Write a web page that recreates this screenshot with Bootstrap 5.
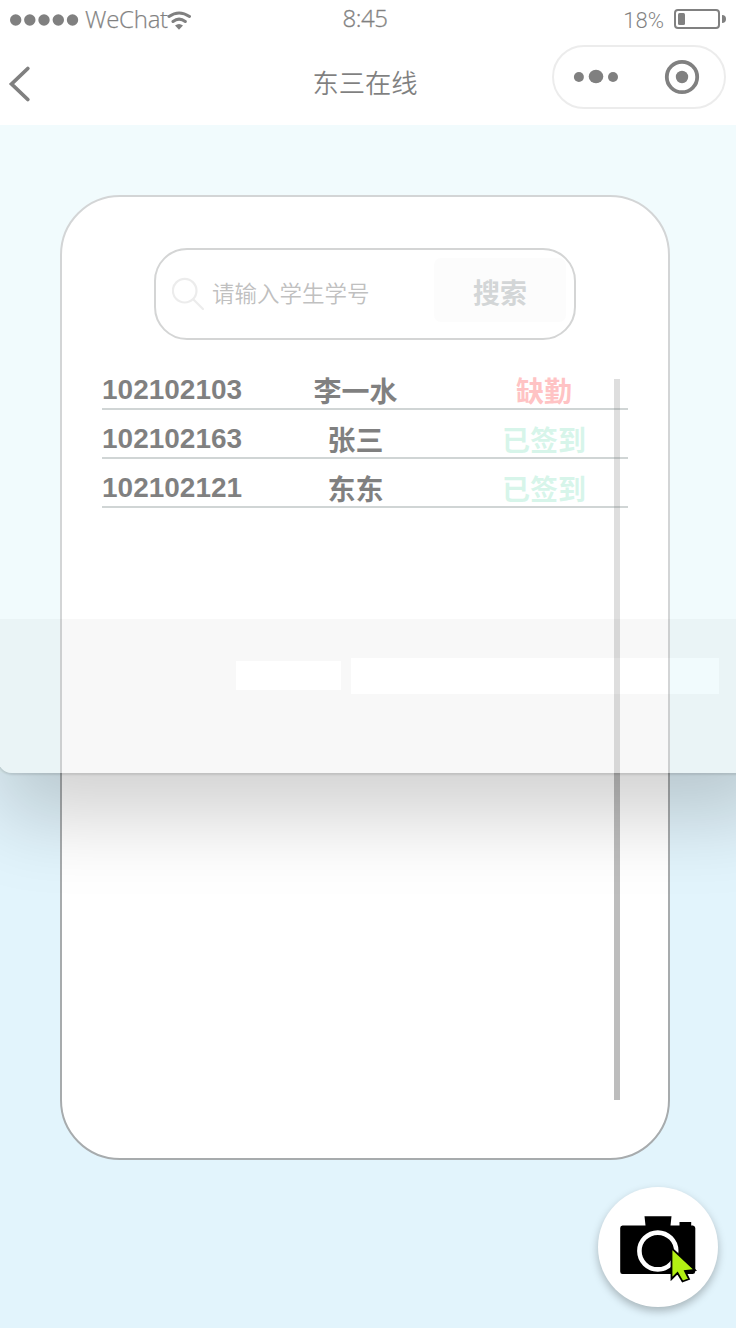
<!DOCTYPE html>
<html lang="zh-CN">
<head>
<meta charset="utf-8">
<meta name="viewport" content="width=device-width, initial-scale=1">
<title>东三在线</title>
<link href="https://cdn.jsdelivr.net/npm/bootstrap@5.3.0/dist/css/bootstrap.min.css" rel="stylesheet">
<style>
  body { background: #e2f4fc; color: #000; font-family: "Liberation Sans", "Noto Sans CJK SC", sans-serif; }
  svg { display: block; flex: none; }
  .phone { width: 736px; height: 1328px; background: linear-gradient(#e3f6fa 773px, #e2f4fc 773px); }
  .topbar { height: 125px; }
  .status { height: 40px; font: 300 24px/38px "Open Sans", sans-serif; }
  .signal { margin-left: 10px; width: 75px; }
  .carrier { width: 81px; white-space: nowrap; letter-spacing: -.25px; margin-top: -3px; -webkit-text-stroke: .25px #000; }
  .clock { left: 0; top: -1px; width: 730px; font-size: 24px; letter-spacing: -.4px; -webkit-text-stroke: .35px #000; }
  .charge { font: 300 22px/41px Roboto, sans-serif; margin-right: 10px; }
  .navrow { height: 85px; }
  .app-title { left: 0; width: 730px; top: 24px; font-size: 26.3px; line-height: 36px; font-family: "Noto Sans CJK SC", sans-serif; font-weight: 350; }
  .capsule { width: 174px; height: 64px; border: 2px solid #d9d9d9; border-radius: 32px; margin: 5px 10px 0 0; }
  .panel { width: 610px; height: 965px; margin: 70px 0 0 60px; border: 2px solid #a7abad; border-radius: 60px; padding: 51px 40px 0; }
  .search { width: 422px; height: 92px; margin-left: 52px; border: 2px solid #a9abab; border-radius: 33px; }
  .search input { width: 218px; margin-left: 6px; margin-bottom: 5px; font-size: 22.5px; line-height: 32px; color: #808080; font-family: "Noto Sans CJK SC", sans-serif; font-weight: 350; }
  .search input::placeholder { color: #808080; opacity: 1; }
  .search-btn { flex: none; width: 132px; height: 64px; background: #f8f8f8; border-radius: 7px; color: #a6acae; font-weight: 700; font-size: 27px; line-height: 64px; border: 0; padding: 4px 0 0; }
  .roll { height: 721px; margin-top: 39px; padding-top: 0; }
  .roll::after { content: ""; position: absolute; right: 8px; top: 0; width: 6px; height: 721px; background: rgba(0,0,0,.26); }
  .entry { display: grid; grid-template-columns: 140px 227px 150px; grid-template-rows: 100%; height: 49px; border-bottom: 2px solid #a0aaaa; font-weight: 700; font-size: 28px; line-height: 28px; }
  .entry:first-child { height: 31px; }
  .entry > span { align-self: end; white-space: nowrap; text-align: center; }
  .entry .sid { text-align: left; margin-bottom: 4px; }
  .entry .cjk { margin-bottom: 1px; }
  .absent { color: #ff8688; }
  .present { color: #afebd5; }
  .fab { right: 18px; bottom: 21px; width: 120px; height: 120px; border-radius: 50%; box-shadow: 0 4px 9px rgba(0,0,0,.26); }
  .ghost { left: -2px; top: 0; width: 780px; height: 773px; padding: 619px 0 0 2px; background: rgba(255,255,255,.5); border-radius: 0 0 14px 14px; overflow: hidden; }
  .ghost-shadow { left: -2px; top: -40px; width: 780px; height: 813px; border-radius: 0 0 14px 14px; box-shadow: 0 1px 2px 1px rgba(0,0,0,.1), 0 44px 80px rgba(0,0,0,.18); }
  .tint { background: rgba(0,0,0,.028); }
  .strip { margin-left: -2px; }
  .middle { display: grid; grid-template-columns: 238px 105px 10px 368px 61px; height: 36px; margin-left: -2px; }
</style>
</head>
<body>
<div class="phone position-relative overflow-hidden">
  <header class="topbar bg-white">
    <div class="status d-flex align-items-center position-relative">
      <svg class="signal" height="12" viewBox="0 0 75 12"><g fill="#000"><circle cx="5.7" cy="6" r="5.7"/><circle cx="19.8" cy="6" r="5.7"/><circle cx="34" cy="6" r="5.7"/><circle cx="48.3" cy="6" r="5.7"/><circle cx="62.5" cy="6" r="5.7"/></g></svg>
      <span class="carrier">WeChat</span>
      <svg width="25" height="20" viewBox="0 0 25 20" fill="none" stroke="#000" stroke-width="3" stroke-linecap="round"><path d="M3 6.500Q13 -.5 23.500 6.500M7 11.500Q13 6.800 19.300 11.500"/><path d="M9 15.500Q13 12.500 17 15.500L13 19.700Z" fill="#000" stroke="none"/></svg>
      <div class="clock position-absolute text-center">8:45</div>
      <span class="charge ms-auto">18%</span>
      <svg class="me-2" width="54" height="22" viewBox="0 0 54 22" style="margin-top:-2px"><rect x="1" y="2" width="44" height="18" rx="3" fill="none" stroke="#000" stroke-width="2"/><rect x="4" y="5" width="7" height="12" rx="1.500"/><path d="M48 7Q52 7 52 11Q52 15 48 15Z"/></svg>
    </div>
    <div class="navrow d-flex justify-content-between position-relative">
      <svg width="40" height="85" viewBox="0 40 40 85"><path d="M27.800 68.500L11.600 84L27.800 99.500" fill="none" stroke="#000" stroke-width="3.800" stroke-linecap="round"/></svg>
      <div class="app-title position-absolute text-center">东三在线</div>
      <div class="capsule">
        <svg width="170" height="60" viewBox="0 0 170 60"><circle cx="24.900" cy="30" r="5"/><ellipse cx="42" cy="29.500" rx="7.300" ry="6.800"/><circle cx="59" cy="30" r="5"/><circle cx="128" cy="30" r="15.200" fill="none" stroke="#000" stroke-width="3.800"/><circle cx="128" cy="30" r="6.200"/></svg>
      </div>
    </div>
  </header>

  <main class="panel bg-white">
    <form class="search d-flex">
      <svg class="ms-3" width="34" height="34" viewBox="0 0 34 34" style="margin-top:27px" fill="none" stroke="#d9d9d9" stroke-width="2.200" stroke-linecap="round"><circle cx="12.700" cy="13.700" r="11.800"/><path d="M21.500 22.500L31 32"/></svg>
      <input class="border-0 bg-transparent p-0" type="text" placeholder="请输入学生学号">
      <button type="button" class="search-btn mt-2 ms-auto me-2">搜索</button>
    </form>
    <section class="roll position-relative">
      <div class="entry"><span class="sid">102102103</span><span class="cjk">李一水</span><span class="cjk absent">缺勤</span></div>
      <div class="entry"><span class="sid">102102163</span><span class="cjk">张三</span><span class="cjk present">已签到</span></div>
      <div class="entry"><span class="sid">102102121</span><span class="cjk">东东</span><span class="cjk present">已签到</span></div>
    </section>
  </main>

  <!-- Fading translucent window and its drop shadow -->
  <div class="ghost-shadow position-absolute pe-none"></div>
  <div class="ghost position-absolute pe-none">
    <div class="strip tint" style="height:39px"></div>
    <div class="middle">
      <div class="tint"></div>
      <div class="d-flex flex-column justify-content-between"><div class="tint" style="height:3px"></div><div class="tint" style="height:4px"></div></div>
      <div class="tint"></div><div></div><div class="tint"></div>
    </div>
    <div class="strip tint" style="height:79px"></div>
  </div>

  <div class="fab bg-white position-absolute">
    <svg width="120" height="120" viewBox="598 1187 120 120">
      <path d="M622.500 1225.500H645.500L644.500 1216.300H671.500L670.500 1225.500H679.500V1222H691.200V1225.500H693Q695.300 1226 695.300 1228V1271.500Q695 1274 692.500 1274H622.500Q620.200 1274 620.200 1271.500V1228Q620.200 1225.500 622.500 1225.500Z"/>
      <circle cx="657.800" cy="1251" r="18.400" fill="none" stroke="#fff" stroke-width="4.600"/>
      <path d="M671.500 1248V1279L677.500 1273L682.500 1281.500L689 1279L685 1271L695 1270Z" fill="#b2f013" stroke="#000" stroke-width="1.800"/>
    </svg>
  </div>
</div>
<script src="https://cdn.jsdelivr.net/npm/bootstrap@5.3.0/dist/js/bootstrap.bundle.min.js"></script>
</body>
</html>
